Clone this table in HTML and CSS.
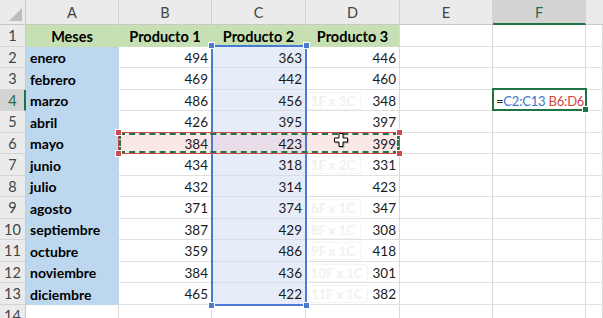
FILE: index.html
```html
<!DOCTYPE html>
<html lang="es">
<head>
<meta charset="utf-8">
<title>Intersección de rangos</title>
<link rel="stylesheet" href="styles.css">
</head>
<body>
<div class="sheet">
  <div class="grid">
    <div class="corner"><span class="tri"></span></div>
    <div class="ch">A</div><div class="ch">B</div><div class="ch">C</div><div class="ch">D</div><div class="ch">E</div><div class="ch sel">F</div><div class="ch last"></div>

    <div class="rh">1</div>
    <div class="c hdr">Meses</div><div class="c hdr">Producto 1</div><div class="c hdr">Producto 2</div><div class="c hdr end">Producto 3</div><div class="c"></div><div class="c"></div><div class="c"></div>

    <div class="rh">2</div>
    <div class="c mes">enero</div><div class="c num">494</div><div class="c num cr">363</div><div class="c num">446</div><div class="c"></div><div class="c"></div><div class="c"></div>

    <div class="rh">3</div>
    <div class="c mes">febrero</div><div class="c num">469</div><div class="c num cr">442</div><div class="c num">460</div><div class="c"></div><div class="c"></div><div class="c"></div>

    <div class="rh sel">4</div>
    <div class="c mes">marzo</div><div class="c num">486</div><div class="c num cr">456</div><div class="c num sp"><span class="ghost">1F x 3C</span>348</div><div class="c"></div><div class="c formula"><span>=<span class="ref-b">C2:C13</span> <span class="ref-r">B6:D6</span></span></div><div class="c"></div>

    <div class="rh">5</div>
    <div class="c mes">abril</div><div class="c num">426</div><div class="c num cr">395</div><div class="c num">397</div><div class="c"></div><div class="c"></div><div class="c"></div>

    <div class="rh">6</div>
    <div class="c mes">mayo</div><div class="c num r6">384</div><div class="c num r6c">423</div><div class="c num r6">399</div><div class="c"></div><div class="c"></div><div class="c"></div>

    <div class="rh">7</div>
    <div class="c mes">junio</div><div class="c num">434</div><div class="c num cr">318</div><div class="c num sp"><span class="ghost">1F x 2C</span>331</div><div class="c"></div><div class="c"></div><div class="c"></div>

    <div class="rh">8</div>
    <div class="c mes">julio</div><div class="c num">432</div><div class="c num cr">314</div><div class="c num">423</div><div class="c"></div><div class="c"></div><div class="c"></div>

    <div class="rh">9</div>
    <div class="c mes">agosto</div><div class="c num">371</div><div class="c num cr">374</div><div class="c num sp"><span class="ghost">6F x 1C</span>347</div><div class="c"></div><div class="c"></div><div class="c"></div>

    <div class="rh">10</div>
    <div class="c mes">septiembre</div><div class="c num">387</div><div class="c num cr">429</div><div class="c num sp"><span class="ghost">8F x 1C</span>308</div><div class="c"></div><div class="c"></div><div class="c"></div>

    <div class="rh">11</div>
    <div class="c mes">octubre</div><div class="c num">359</div><div class="c num cr">486</div><div class="c num sp"><span class="ghost">9F x 1C</span>418</div><div class="c"></div><div class="c"></div><div class="c"></div>

    <div class="rh">12</div>
    <div class="c mes">noviembre</div><div class="c num">384</div><div class="c num cr">436</div><div class="c num sp"><span class="ghost">10F x 1C</span>301</div><div class="c"></div><div class="c"></div><div class="c"></div>

    <div class="rh">13</div>
    <div class="c mes">diciembre</div><div class="c num">465</div><div class="c num cr">422</div><div class="c num sp"><span class="ghost">11F x 1C</span>382</div><div class="c"></div><div class="c"></div><div class="c"></div>

    <div class="rh">14</div>
    <div class="c"></div><div class="c"></div><div class="c"></div><div class="c"></div><div class="c"></div><div class="c"></div><div class="c"></div>
  </div>

  <div class="overlay">
    <div class="ov-blue">
      <span class="h h-tl"></span><span class="h h-tr"></span><span class="h h-bl"></span><span class="h h-br"></span>
    </div>
    <div class="ov-red">
      <div class="marquee"></div>
      <span class="h h-tl"></span><span class="h h-tr"></span><span class="h h-bl"></span><span class="h h-br"></span>
    </div>
    <div class="ov-active"><span class="fill-handle"></span></div>

    <svg class="cursor" width="16" height="16" viewBox="0 0 16 16" aria-hidden="true">
      <polygon points="6,1.5 10,1.5 10,6 14.5,6 14.5,10 10,10 10,14.5 6,14.5 6,10 1.5,10 1.5,6 6,6" fill="#ffffff" stroke="#000000" stroke-width="1"/>
    </svg>
  </div>
</div>
</body>
</html>
```

FILE: styles.css
```css
* { box-sizing: border-box; }

html, body {
  margin: 0;
  padding: 0;
  background: #ffffff;
  overflow: hidden;
}

.sheet {
  position: relative;
  width: 603px;
  height: 318px;
  overflow: hidden;
  font-family: Lato, "Liberation Sans", sans-serif;
  font-size: 13.5px;
  color: #000;
}

.grid,
.overlay {
  display: grid;
  grid-template-columns: 26px 93px 93px 94px 94px 93px 93px 1fr;
  grid-template-rows: 25px 22px 21px 22px 21px 22px 21px 22px 21px 22px 21px 22px 21px 22px 21px;
  width: 603px;
}

.overlay {
  position: absolute;
  left: 0;
  top: 0;
  pointer-events: none;
}

.corner {
  background: #ebebeb;
  border-right: 1px solid #c9c9c9;
  border-bottom: 1px solid #c9c9c9;
  position: relative;
}
.tri {
  position: absolute;
  right: 3px;
  bottom: 3px;
  width: 0;
  height: 0;
  border-left: 13px solid transparent;
  border-bottom: 13px solid #bdbdbd;
}

.ch {
  background: #ebebeb;
  border-right: 1px solid #d2d2d2;
  border-bottom: 1px solid #c9c9c9;
  display: flex;
  align-items: center;
  justify-content: center;
  font-size: 14.5px;
  color: #444;
  padding-top: 1px;
}
.ch.sel {
  background: #d3d3d3;
  color: #2c6a47;
  border-bottom: 2px solid #217346;
  padding-top: 2px;
}
.ch.last { border-right: none; }

.rh {
  background: #ebebeb;
  border-right: 1px solid #c9c9c9;
  border-bottom: 1px solid #d4d4d4;
  display: flex;
  align-items: center;
  justify-content: center;
  font-size: 14.5px;
  color: #444;
}
.rh.sel {
  background: #d3d3d3;
  color: #2c6a47;
  border-right: 2px solid #217346;
  padding-left: 1px;
}

.c {
  border-right: 1px solid #d9d9d9;
  border-bottom: 1px solid #e1e1e1;
  display: flex;
  align-items: center;
  padding: 1px 4px 0 4px;
  white-space: nowrap;
  min-width: 0;
}

.hdr {
  background: #c6e0b4;
  border-color: #c6e0b4;
  font-weight: 700;
  font-size: 14.5px;
  justify-content: center;
}
.hdr.end { border-right-color: #d9d9d9; }

.mes {
  background: #bdd7ee;
  border-color: #bdd7ee;
  font-weight: 700;
  font-size: 14px;
}

.num {
  justify-content: flex-end;
  padding-right: 3px;
  color: #1a1a1a;
}
.sp { justify-content: space-between; }

.cr {
  background: #e7edf8;
  border-bottom-color: #d8dde6;
}
.r6 { background: #fae8e7; }
.r6c { background: #e9dde9; }

.ghost {
  color: #f1f1f1;
  font-weight: 700;
  font-size: 13px;
  border: 1px solid #f4f4f4;
  border-radius: 2px;
  padding: 0 5px 0 2px;
  margin-left: -2px;
}

.formula {
  padding-left: 3px;
  font-size: 13px;
  letter-spacing: -0.2px;
  color: #222;
}
.ref-b { color: #3b73cf; }
.ref-r { color: #d9413f; }

/* overlays */
.ov-blue {
  grid-column: 4 / 5;
  grid-row: 3 / 15;
  margin: -2px -1px -1px -1px;
  border: 2px solid #4a7bd0;
  position: relative;
}
.ov-red {
  grid-column: 3 / 6;
  grid-row: 7 / 8;
  margin: -1px 0 0 -1px;
  border: 1px solid #cf4a4a;
  position: relative;
}
.marquee {
  width: 100%;
  height: 100%;
  border: 2px dashed #217346;
}
.h {
  position: absolute;
  width: 5px;
  height: 5px;
  border: 1px solid #ffffff;
  box-sizing: content-box;
}
.ov-blue .h { background: #4a7bd0; }
.ov-red .h { background: #cf4a4a; }
.ov-blue .h-tl { left: -5px; top: -5px; }
.ov-blue .h-tr { right: -5px; top: -5px; }
.ov-blue .h-bl { left: -5px; bottom: -5px; }
.ov-blue .h-br { right: -5px; bottom: -5px; }
.ov-red .h-tl { left: -4px; top: -4px; }
.ov-red .h-tr { right: -4px; top: -4px; }
.ov-red .h-bl { left: -4px; bottom: -4px; }
.ov-red .h-br { right: -4px; bottom: -4px; }

.ov-active {
  grid-column: 7 / 8;
  grid-row: 5 / 6;
  margin: -2px -1px 0 -1px;
  border: 2px solid #217346;
  position: relative;
}
.fill-handle {
  position: absolute;
  right: -4px;
  bottom: -4px;
  width: 5px;
  height: 5px;
  background: #217346;
  border: 1px solid #ffffff;
  box-sizing: content-box;
}

.cursor {
  position: absolute;
  left: 333px;
  top: 132px;
  filter: drop-shadow(1px 1px 0 rgba(0,0,0,0.25));
}
```
